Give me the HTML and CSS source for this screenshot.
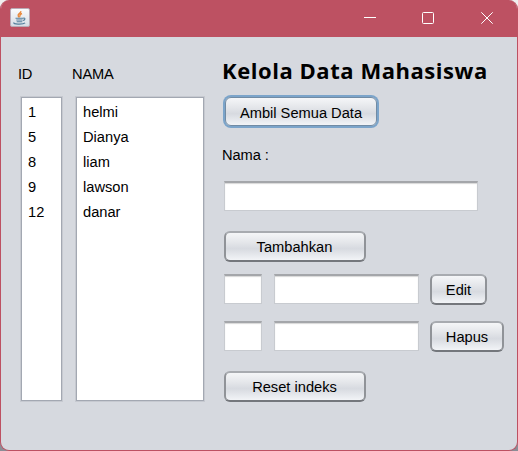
FILE: index.html
```html
<!DOCTYPE html>
<html lang="id">
<head>
<meta charset="utf-8">
<title>Kelola Data Mahasiswa</title>
<link rel="stylesheet" href="styles.css">
</head>
<body>
<div class="window">
  <header class="titlebar">
    <svg class="app-icon" width="20" height="20" viewBox="0 0 20 20">
      <defs><linearGradient id="tile" x1="0" y1="0" x2="0" y2="1"><stop offset="0" stop-color="#fbfcfd"/><stop offset="1" stop-color="#d5dce4"/></linearGradient></defs>
      <rect x=".5" y=".5" width="19" height="18" rx="1.5" fill="url(#tile)" stroke="#b9aab5"/>
      <path d="M10.800 3.200c.5 2-3.300 2.500-2.600 4.500.2.700.8 1.200 1.200 1.800M12 5.500c-2 .8-2.700 1.700-1.600 3" fill="none" stroke="#e8893b" stroke-width="1.400"/>
      <path d="M5.500 10.300h8M6.300 12h6.200M6.700 13.800h5.600M13.200 10.200c2.400-.8 2.300 1.800-.3 2.300" fill="none" stroke="#56809d" stroke-width="1.100"/>
      <path d="M4.300 14.600c-2.500 1.700 8.700 2.200 10.800.3" fill="none" stroke="#56809d" stroke-width="1.200"/>
    </svg>
    <div class="controls">
      <svg class="minimize" width="12" height="12" viewBox="0 0 12 12"><path d="M0 5.500h12"/></svg>
      <svg width="12" height="12" viewBox="0 0 12 12"><rect x=".5" y=".5" width="11" height="11" rx="1"/></svg>
      <svg width="12" height="12" viewBox="0 0 12 12"><path d="M.3.300l11.400 11.400M11.700.3L.3 11.700"/></svg>
    </div>
  </header>
  <main class="content">
    <section class="column column-id">
      <h2 class="label">ID</h2>
      <ul class="list"><li>1</li><li>5</li><li>8</li><li>9</li><li>12</li></ul>
    </section>
    <section class="column column-name">
      <h2 class="label">NAMA</h2>
      <ul class="list"><li>helmi</li><li>Dianya</li><li>liam</li><li>lawson</li><li>danar</li></ul>
    </section>
    <section class="form">
      <h1 class="title">Kelola Data Mahasiswa</h1>
      <button class="button fetch">Ambil Semua Data</button>
      <label class="name-label" for="nama">Nama :</label>
      <input class="field name-field" id="nama">
      <button class="button wide">Tambahkan</button>
      <div class="row edit-row">
        <input class="field"><input class="field">
        <button class="button">Edit</button>
      </div>
      <div class="row delete-row">
        <input class="field"><input class="field">
        <button class="button delete">Hapus</button>
      </div>
      <button class="button wide reset">Reset indeks</button>
    </section>
  </main>
</div>
</body>
</html>
```
FILE: styles.css
```css
* { box-sizing: border-box; }
body {
  margin: 0;
  background: linear-gradient(#f0f0f0 50%, #8b8d96 50%);
  font: 14.67px/18px "Liberation Sans", Arial, sans-serif;
  color: #000;
}
.window {
  width: 518px;
  height: 451px;
  border: 1px solid #bd5162;
  border-top: 0;
  border-radius: 9px;
  background: #d6d9df;
  overflow: hidden;
}
.titlebar {
  height: 37px;
  padding: 8px 24px 0 9px;
  display: flex;
  justify-content: space-between;
  background: #bd5162;
}
.controls { display: flex; gap: 47px; padding-top: 4px; }
.controls svg { fill: none; stroke: #fff; stroke-width: 1; }
.controls .minimize { margin-right: -1px; }
.content { display: flex; height: 413px; }
.label { margin: 0 0 14px; font: inherit; letter-spacing: -.2px; }
.column { padding-top: 28px; }
.column-id { width: 61px; padding-left: 19px; }
.column-id .label { margin-left: -2px; }
.column-name { width: 143px; padding-left: 13px; }
.column-name .label { margin-left: -3px; }
.list {
  list-style: none;
  margin: 0;
  height: 304px;
  padding: 2px 6px;
  border: 1px solid #a3a8b2;
  outline: 1px solid #c6c9d0;
  background: #fff;
  line-height: 25px;
}
.column-id .list { width: 41px; margin-left: 1px; }
.column-name .list { width: 128px; margin-left: 1px; }
.form { padding: 18px 0 0 19px; width: 300px; display: flex; flex-direction: column; align-items: flex-start; }
.title {
  margin: 0 0 11px -2px;
  font: 700 22px/30px "Open Sans", sans-serif;
  letter-spacing: .55px;
  white-space: nowrap;
}
.button {
  height: 31px;
  padding: 1px 0 0;
  border: 2px solid #85888d;
  border-color: #a8abb0 #909398 #74777c;
  border-radius: 6px;
  background: linear-gradient(#f5f6f8 0%, #e4e6ea 35%, #d7dae0 58%, #f2f4f7 100%);
  font: inherit;
  color: #000;
}
.wide { width: 142px; padding-right: 1px; }
.fetch {
  width: 152px;
  height: 29px;
  margin: 1px 0 20px 1px;
  padding-top: 2px;
  border-width: 1px;
  border-color: #718ba4;
  box-shadow: 0 0 0 2px #7ba4ca;
}
.name-label { margin-left: -2px; letter-spacing: -.1px; }
.field {
  min-width: 0;
  padding: 0 5px;
  height: 30px;
  border: 1px solid #c8cbd0;
  border-top: 2px solid #a4a6aa;
  border-radius: 0;
  background: #fff;
  box-shadow: inset 0 1px 1px #d8d8d8;
  font: inherit;
}
.name-field { width: 254px; margin: 17px 0 20px; }
.row { display: grid; grid-template-columns: 38px 145px 56px; column-gap: 12px; }
.row .button { margin-left: -1px; }
.edit-row { margin: 12px 0 16px; }
.delete { width: 74px; }
.reset { margin-top: 19px; }
```
